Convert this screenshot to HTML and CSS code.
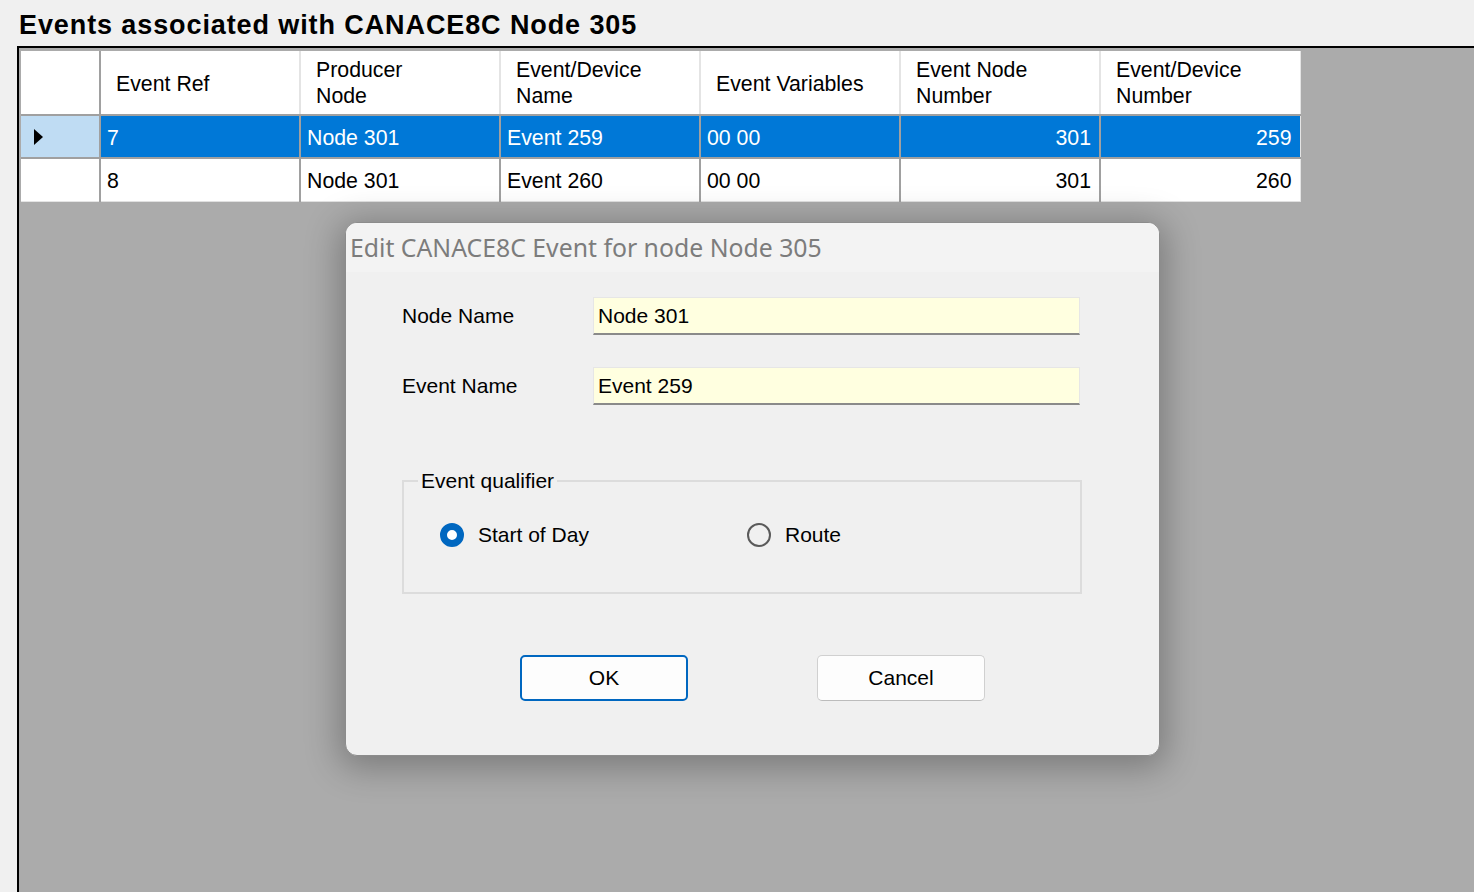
FILE: index.html
```html
<!DOCTYPE html>
<html>
<head>
<meta charset="utf-8">
<link rel="stylesheet" href="styles.css">
</head>
<body>
<h1 class="page-title">Events associated with CANACE8C Node 305</h1>
<div class="grid-panel">
  <table class="grid">
    <thead>
      <tr>
        <th class="rowhead"></th>
        <th class="single">Event Ref</th>
        <th>Producer<br>Node</th>
        <th>Event/Device<br>Name</th>
        <th class="single">Event Variables</th>
        <th>Event Node<br>Number</th>
        <th>Event/Device<br>Number</th>
      </tr>
    </thead>
    <tbody>
      <tr class="selected">
        <td class="rowhead"><span class="arrow"></span></td>
        <td>7</td>
        <td>Node 301</td>
        <td>Event 259</td>
        <td>00 00</td>
        <td class="num">301</td>
        <td class="num">259</td>
      </tr>
      <tr>
        <td class="rowhead"></td>
        <td>8</td>
        <td>Node 301</td>
        <td>Event 260</td>
        <td>00 00</td>
        <td class="num">301</td>
        <td class="num">260</td>
      </tr>
    </tbody>
  </table>
</div>

<div class="dialog">
  <div class="dialog-title">Edit CANACE8C Event for node Node 305</div>
  <div class="dialog-body">
    <div class="field-row">
      <span class="field-label">Node Name</span>
      <div class="field-input">Node 301</div>
    </div>
    <div class="field-row">
      <span class="field-label">Event Name</span>
      <div class="field-input">Event 259</div>
    </div>
    <fieldset class="group">
      <legend class="group-legend">Event qualifier</legend>
      <div class="radios">
        <label class="radio-item radio-first"><span class="radio checked"></span>Start of Day</label>
        <label class="radio-item"><span class="radio"></span>Route</label>
      </div>
    </fieldset>
    <div class="buttons">
      <div class="btn btn-default">OK</div>
      <div class="btn">Cancel</div>
    </div>
  </div>
</div>
</body>
</html>
```

FILE: styles.css
```css
html, body {
  margin: 0;
  padding: 0;
  height: 100%;
  overflow: hidden;
}
body {
  background: #f0f0f0;
  font-family: "Liberation Sans", Arial, sans-serif;
  color: #000;
  display: flex;
  flex-direction: column;
}
.page-title {
  margin: 0;
  padding: 9px 0 0 19px;
  height: 46px;
  box-sizing: border-box;
  font-size: 27px;
  letter-spacing: 0.9px;
  line-height: 32px;
  font-weight: bold;
}
.grid-panel {
  flex: 1;
  margin-left: 17px;
  border-left: 2px solid #000;
  border-top: 2px solid #000;
  background: #ababab;
  padding: 3px 2px 2px 2px;
}
.grid {
  border-collapse: collapse;
  table-layout: fixed;
  font-size: 21.3px;
}
.grid th {
  background: #fff;
  font-weight: normal;
  text-align: left;
  vertical-align: middle;
  height: 64px;
  width: 200px;
  padding: 0 0 0 15px;
  box-sizing: border-box;
  line-height: 26px;
  border-right: 2px solid #e4e4e4;
  border-bottom: 2px solid #a0a0a0;
}
.grid th.single {
  padding-top: 2px;
}
.grid th.rowhead {
  width: 79px;
  border-right: 2px solid #a0a0a0;
  padding: 0;
}
.grid td {
  background: #fff;
  height: 43px;
  padding: 3px 0 0 6px;
  box-sizing: border-box;
  border-right: 2px solid #a0a0a0;
  border-bottom: 2px solid #a0a0a0;
  white-space: nowrap;
}
.grid tbody tr:last-child td {
  border-bottom: 1px solid #e0e0e0;
  height: 43px;
}
.grid td.rowhead {
  padding: 0 0 0 13px;
  border-right: 2px solid #a0a0a0;
}
.grid tbody tr:last-child td.rowhead {
  border-bottom: 1px solid #e4e4e4;
}
.grid td:last-child,
.grid th:last-child {
  border-right: 1px solid #e4e4e4;
}
.grid td.num {
  text-align: right;
  padding: 3px 8px 0 0;
}
.grid tr.selected td {
  background: #0078d7;
  color: #fff;
}
.grid tr.selected td.rowhead {
  background: #bfdcf3;
}
.arrow {
  display: inline-block;
  width: 0;
  height: 0;
  border-left: 9px solid #000;
  border-top: 8.5px solid transparent;
  border-bottom: 8.5px solid transparent;
  vertical-align: middle;
}

/* dialog */
.dialog {
  position: absolute;
  left: 345px;
  top: 222px;
  width: 815px;
  height: 534px;
  box-sizing: border-box;
  background: #f0f0f0;
  border: 1px solid #8c8c8c;
  border-radius: 12px;
  box-shadow: 0 6px 34px 6px rgba(0, 0, 0, 0.28);
  overflow: hidden;
  display: flex;
  flex-direction: column;
}
.dialog-title {
  height: 49px;
  background: #f3f3f3;
  color: #7c7c7c;
  font-family: "Noto Sans", "Open Sans", sans-serif;
  font-size: 24.8px;
  line-height: 49px;
  padding-left: 4px;
  white-space: nowrap;
}
.dialog-body {
  flex: 1;
  padding: 25px 0 0 56px;
  font-size: 21px;
}
.field-row {
  display: flex;
  align-items: center;
  height: 38px;
  margin-bottom: 32px;
}
.field-label {
  width: 191px;
}
.field-input {
  width: 487px;
  height: 38px;
  box-sizing: border-box;
  background: #ffffe0;
  border: 1px solid #e6e6e6;
  border-bottom: 2px solid #8a8a8a;
  padding: 0 0 0 4px;
  line-height: 35px;
}
.group {
  margin: 65px 0 0 0;
  width: 680px;
  height: 124px;
  box-sizing: border-box;
  border: 2px solid #dcdcdc;
  padding: 0 0 0 14px;
}
.group-legend {
  padding: 0 3px;
  line-height: 22px;
}
.radios {
  display: flex;
  align-items: center;
  padding: 31px 0 0 22px;
}
.radio-item {
  display: flex;
  align-items: center;
  gap: 14px;
}
.radio-first {
  width: 307px;
}
.radio {
  display: inline-block;
  width: 24px;
  height: 24px;
  box-sizing: border-box;
  border-radius: 50%;
  border: 2px solid #5a5a5a;
  background: transparent;
}
.radio.checked {
  border: 7.5px solid #0067c0;
  background: #fff;
}
.buttons {
  display: flex;
  gap: 129px;
  padding: 61px 0 0 118px;
}
.btn {
  width: 168px;
  height: 46px;
  box-sizing: border-box;
  background: #fdfdfd;
  border: 1px solid #d0d0d0;
  border-bottom-color: #bcbcbc;
  border-radius: 5px;
  display: flex;
  align-items: center;
  justify-content: center;
  font-size: 21px;
}
.btn-default {
  border: 2px solid #0067c0;
}
```
